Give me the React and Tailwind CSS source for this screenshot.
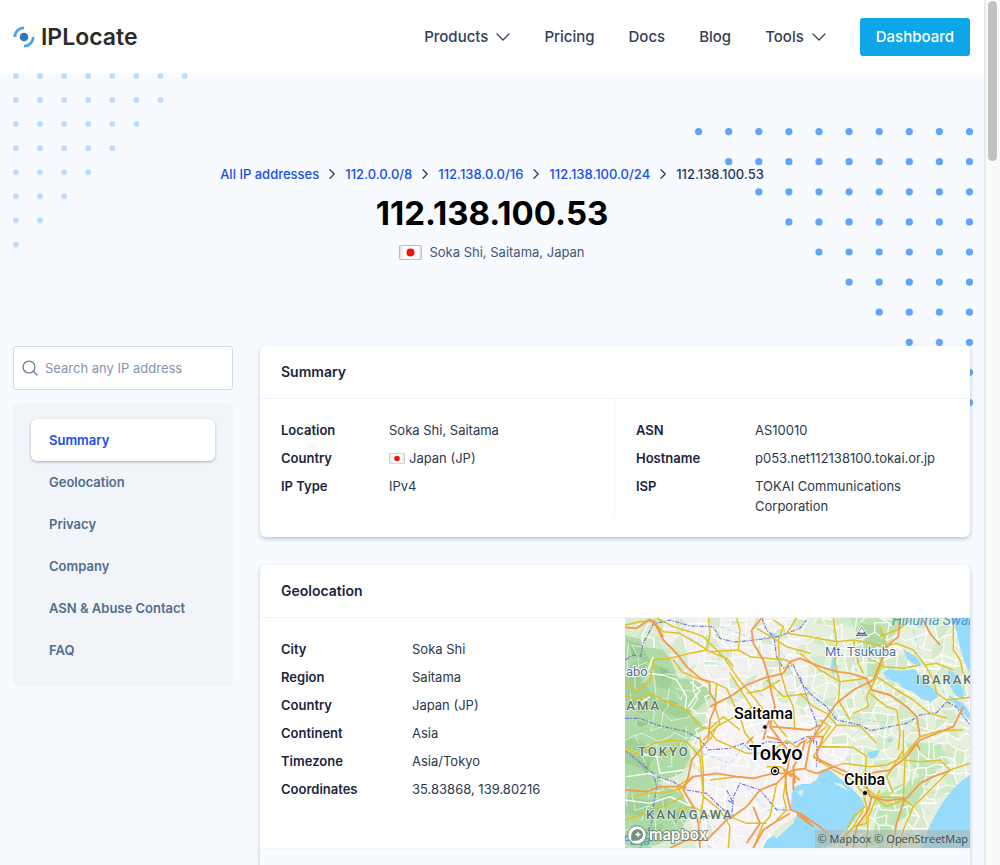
import React from "react";

const crumbs = ["All IP addresses", "112.0.0.0/8", "112.138.0.0/16", "112.138.100.0/24"];
const sections = ["Summary", "Geolocation", "Privacy", "Company", "ASN & Abuse Contact", "FAQ"];

function ChevronDown() {
  return (
    <svg width="14" height="8" viewBox="0 0 14 8" fill="none" stroke="#334155" strokeWidth="1.3" strokeLinecap="round" strokeLinejoin="round" aria-hidden="true">
      <path d="M1 1l6 6 6-6" />
    </svg>
  );
}

function ChevronRight() {
  return (
    <svg width="6" height="10" viewBox="0 0 6 10" fill="none" stroke="#334155" strokeWidth="1.3" strokeLinecap="round" strokeLinejoin="round" aria-hidden="true">
      <path d="M1 .8L5.2 5 1 9.200" />
    </svg>
  );
}

function Flag({ className }) {
  return (
    <svg className={className} viewBox="0 0 23 15" role="img" aria-label="Flag of Japan">
      <defs>
        <linearGradient id="flag-shade" x1="0" x2="1">
          <stop offset="0" stopColor="#dcdcdc" />
          <stop offset=".2" stopColor="#fff" />
          <stop offset=".8" stopColor="#fff" />
          <stop offset="1" stopColor="#dcdcdc" />
        </linearGradient>
      </defs>
      <rect x=".5" y=".5" width="22" height="14" rx="1" fill="url(#flag-shade)" stroke="#bdbdbd" />
      <circle cx="11.500" cy="7.500" r="4" fill="#f50f0f" />
    </svg>
  );
}

function Logo() {
  return (
    <a href="#home" className="flex items-center gap-[6px] text-[23px] leading-8 font-semibold text-[#2b2b2b]">
      <svg width="22" height="22" viewBox="0 0 22 22" fill="none" aria-hidden="true">
        <circle cx="11" cy="11" r="4.300" fill="#3178b9" />
        <path d="M1.800 11A9.200 9.200 0 0 1 11 1.800" stroke="#46a6ea" strokeWidth="2.800" />
        <path d="M20.200 11A9.200 9.200 0 0 1 11 20.200" stroke="#46a6ea" strokeWidth="2.800" />
      </svg>
      IPLocate
    </a>
  );
}

function DotTriangle({ className, count, pitch, radius, fromLeft }) {
  const size = (count - 1) * pitch + radius * 2;
  const dots = [];
  for (let row = 0; row < count; row += 1) {
    for (let col = 0; col < count - row; col += 1) {
      const offset = radius + col * pitch;
      dots.push(<circle key={`${row}-${col}`} cx={fromLeft ? offset : size - offset} cy={radius + row * pitch} r={radius} />);
    }
  }
  return (
    <svg className={className} width={size} height={size} viewBox={`0 0 ${size} ${size}`} fill="currentColor" aria-hidden="true">
      {dots}
    </svg>
  );
}

function Facts({ rows, labelClass }) {
  return (
    <dl className="flex flex-col gap-2 text-[13px] leading-5">
      {rows.map(([label, value]) => (
        <div key={label} className="flex">
          <dt className={`${labelClass} shrink-0 font-semibold text-[#1a2540]`}>{label}</dt>
          <dd className="min-w-0 text-[#2c384c]">{value}</dd>
        </div>
      ))}
    </dl>
  );
}

function Card({ title, children }) {
  return (
    <section className="overflow-hidden rounded-md bg-white shadow-[0_2px_4px_rgba(71,105,140,0.35)]">
      <h2 className="border-b border-[#f1f4f8] px-[21px] py-4 text-[14px] leading-5 font-semibold text-[#1a2540]">{title}</h2>
      {children}
    </section>
  );
}

/* Seeded generator, so that the minor street mesh is the same on every load. */
function streetMesh() {
  let seed = 17;
  const rand = () => {
    seed = (seed * 16807) % 2147483647;
    return seed / 2147483647;
  };
  const cols = 36;
  const rows = 24;
  const pts = [];
  for (let r = 0; r <= rows; r += 1) {
    pts.push([]);
    for (let c = 0; c <= cols; c += 1) {
      pts[r].push([15 + c * 30 + (rand() - 0.5) * 28, 20 + r * 30 + (rand() - 0.5) * 28]);
    }
  }
  const streets = [];
  const woods = [];
  const range = [];
  for (let r = 0; r < rows; r += 1) {
    for (let c = 0; c < cols; c += 1) {
      const [x, y] = pts[r][c];
      const right = pts[r][c + 1];
      const down = pts[r + 1][c];
      const diag = pts[r + 1][c + 1];
      const mountain = c < 7 && (r > 2 || c < 2);
      const list = mountain ? range : streets;
      const odds = mountain ? 0.35 : 0.66;
      if (rand() < odds) list.push(`M${x.toFixed(0)} ${y.toFixed(0)}L${right[0].toFixed(0)} ${right[1].toFixed(0)}`);
      if (rand() < odds) list.push(`M${x.toFixed(0)} ${y.toFixed(0)}L${down[0].toFixed(0)} ${down[1].toFixed(0)}`);
      if (rand() < 0.34) {
        woods.push(`M${x.toFixed(0)} ${y.toFixed(0)}L${right[0].toFixed(0)} ${right[1].toFixed(0)}L${diag[0].toFixed(0)} ${diag[1].toFixed(0)}L${down[0].toFixed(0)} ${down[1].toFixed(0)}Z`);
      }
    }
  }
  return { streets: streets.join(""), woods: woods.join(""), range: range.join("") };
}

const mesh = streetMesh();

function RegionMap() {
  return (
    <svg className="block h-full w-full" viewBox="0 0 345 230" preserveAspectRatio="xMidYMid slice" role="img" aria-label="Map of the Tokyo area">
      <g transform="translate(-5 -8) scale(0.33333)">
        <rect x="0" y="0" width="1080" height="740" fill="#e4efdc" />
        <path d="M15 24H300L290 90 250 130 300 210 290 300 260 420 200 560 240 714H15Z" fill="#dcebd4" />
        <path d="M120 24H520L570 120 560 250 610 330 720 470 700 560 520 714H230L190 540 230 400 270 280 200 190 120 100Z" fill="#f0f0ee" />
        <path d="M290 290L400 230 530 280 600 400 680 470 700 520 520 714H260L210 540 250 420Z" fill="#f6f2f5" />
        <path d="M560 330L620 280 680 380 700 500 600 500Z" fill="#f4f1f3" />
        <path d={mesh.woods} fill="#cbe6c0" opacity=".65" />
        <path d="M300 300L400 250 530 290 610 400 650 460 690 520 520 714H300L250 600 230 520 260 420Z" fill="#f6f2f5" opacity=".85" />
        {/* western ranges */}
        <path d="M15 75L60 88 70 110 125 118 150 145 175 205 225 210 262 235 272 262 230 300 190 290 262 355 225 372 200 400 212 440 185 490 110 520 175 545 220 600 195 640 160 680 90 714H15Z" fill="#aedba5" />
        <path d="M20 90L60 100 90 150 60 200 95 250 150 280 220 300 190 330 120 300 60 310 15 290V180L50 150ZM100 160L160 190 150 240 110 230ZM15 380L60 390 110 430 80 480 15 460ZM15 560L90 570 160 550 130 600 70 620 15 610ZM60 660L130 640 120 690 70 700Z" fill="#99cd92" opacity=".75" />
        <path d="M30 110L50 125 40 150ZM120 170L145 180 130 210ZM130 262L175 280 160 292ZM40 330L90 340 60 352ZM60 460L90 455 82 500ZM140 620L180 600 170 640ZM30 270L60 275 40 300Z" fill="#86bd82" opacity=".6" />
        {/* Mt. Tsukuba and Boso hills */}
        <path d="M690 24H860L820 80 800 150 770 210 740 200 745 140 700 120 710 70Z" fill="#bfe4b4" />
        <path d="M720 40L780 50 800 90 780 130 745 150 735 90Z" fill="#a5d49c" opacity=".7" />
        <path d="M760 560L850 520 950 480 900 560 870 610 830 640 800 714H750L770 620Z" fill="#bfe5b4" />
        <path d="M860 400L960 400 990 460 900 500 870 460ZM780 590L840 600 800 650Z" fill="#c3e7b8" />
        <path d={mesh.streets} fill="none" stroke="#fff" strokeWidth="3.800" strokeLinecap="round" opacity=".9" />
        <path d={mesh.range} fill="none" stroke="#eef8ea" strokeWidth="3" strokeLinecap="round" opacity=".75" />
        <path d="M100 140L80 190 130 195 170 210 200 260 195 300M90 260L30 300M210 215L240 240 205 290M15 420L110 440 120 490 190 480M15 570L90 580 150 560 215 590M20 500L90 490 150 520" fill="none" stroke="#fff" strokeWidth="4" strokeLinejoin="round" />
        {/* water */}
        <g fill="#97dcfc">
          <path d="M1000 24H1050V190Q1028 150 1018 105T1000 24Z" />
          <path d="M790 188L805 178 840 182 885 178 905 200 925 225 950 245 952 262 935 275 905 268 880 245 850 235 835 218 800 206Z" />
          <path d="M850 118L870 130 890 140 905 165 880 162 862 148ZM985 178L1005 190 1012 215 1030 235 1032 270 1005 255 990 225 982 205ZM985 255L1030 280 1050 310V330L1010 290Z" />
          <path d="M640 130L648 150 640 200 632 170ZM450 65L470 72 462 84 448 80ZM740 430L780 418 770 440 750 448ZM800 388L822 384 810 400Z" />
          <path d="M570 522L545 522 525 530 515 550 512 600 535 612 500 650 470 670 440 690 428 714H600L650 700 665 670 690 650 710 620 735 590 720 560 690 530 655 500 630 480 600 485 590 510Z" />
          <path d="M1050 494Q1000 525 960 590T905 714H1050Z" />
        </g>
        <path d="M530 545L550 540 545 560ZM455 670L530 612 520 640 470 685ZM690 545L660 520 640 520M710 618L685 640" fill="#e8edda" />
        <g fill="none" stroke="#97dcfc" strokeWidth="2.500" strokeDasharray="14 9" strokeLinejoin="round">
          <path d="M130 30L180 70 240 100 290 160 330 190M430 80L480 120 520 200M300 50L410 90M360 240L420 330M560 230L680 320 800 340M640 60L650 200M700 150L740 280M380 530L440 600 520 590M240 620L300 660M250 430L330 460 380 400" />
          <path d="M880 60L900 130M930 180L980 260M760 290L700 380M850 540L930 610" />
        </g>
        {/* prefecture borders */}
        <g fill="none" stroke="#7676d8" strokeWidth="3.500" strokeDasharray="13 4 4 4" strokeLinejoin="round">
          <path d="M15 150L40 135 62 140 70 100 100 42 150 30 210 48 280 50 300 85 340 96 390 92 440 85 480 78 540 55 560 30M425 24L440 60 462 82 470 140 490 175 520 165 545 220 580 260 620 290 650 330 720 345 752 362 800 352 860 340 900 315 950 308 980 275 1010 292 1050 345" />
          <path d="M15 325L60 325 110 345 200 365 240 388 265 420 330 415 370 400 390 420 440 395 520 400 560 380 590 395 590 470M540 200L570 290 590 340 580 400M15 420L50 450 100 490 110 530 100 590 95 640 60 714M110 500L160 515 200 540 260 550 300 590 335 620 340 560 360 520 420 540 470 600 510 600M320 540L340 580 320 570" />
        </g>
        {/* main roads */}
        <g fill="none" stroke="#e3c023" strokeWidth="4.500" strokeLinejoin="round">
          <path d="M15 45L60 35 95 32 130 65 180 70 230 100 270 125 320 145 340 170M110 24L160 50 210 65 250 80 280 110 310 140 350 200 400 260 430 300 455 350M265 24L270 70 260 120 210 130 150 145 100 150 90 215 50 245 15 218M160 148L185 185 230 205 275 215 320 235 340 280 360 320 375 370 400 400" />
          <path d="M350 24L360 60 355 120 390 140 440 145 500 150 520 165M355 120L270 125M410 55L460 85 500 110 570 130M460 30L490 50 475 90 480 180 500 250 520 290 525 360M15 260L60 265 90 250 130 270 200 300 240 350 270 356 310 320 360 360M290 220L285 290 300 340 250 390M330 190L400 300 450 320 500 380M440 210L490 260 570 250M380 250L430 240 480 210M530 24L500 70 570 80 650 95 700 90 745 98 790 110 830 100 880 120 915 165 950 160 1000 180" />
          <path d="M640 24L650 100 645 160 660 220 655 270 690 330M540 130L600 180 660 215 740 205M780 80L840 55 870 30M780 50L800 110 770 200 740 260 745 290 700 310M700 90L715 160 730 190M1000 24L1000 120 1020 150 1035 210M770 200L830 240 880 270 930 310 980 325M915 165L940 210 950 250 980 270 1050 262M760 150L790 170 850 175 900 165M750 250L800 290 830 300 840 370 835 420M540 250L580 290 620 310 650 345 720 348 770 400M650 345L600 410 660 410" />
          <path d="M15 420L60 430 100 400 150 390 200 395 240 440 250 560 300 600 330 650 325 714M15 630L80 610 150 580 190 560 170 530 220 500M265 360L290 390 380 430 450 430 500 390 540 420M240 380L250 480 250 560 240 640M270 510L350 500 400 505M330 620L380 640 440 640M470 520L450 620 430 640 400 714M500 490L490 560 500 600 470 630M530 500L480 470 440 470M600 410L580 440 640 480 690 505 730 550 740 590 740 640 700 650 660 700" />
          <path d="M590 410L700 412 740 440 735 490 740 520M600 485L670 460 750 470 800 465 850 440 850 360M740 545L800 590 850 570 855 450 900 455 960 450 990 480 1050 460M855 570L880 590 940 530 990 480M850 440L900 380 960 362 1030 360M720 520L770 560 860 565M780 540L745 620 740 714M880 590L850 660 840 714M680 660L700 620 735 590" />
          <path d="M270 390L290 350 400 290M120 440L180 400M160 600L220 590 270 620M40 560L80 550 130 550 200 530M660 690L700 650 730 600M560 400L620 350M600 330L630 350 610 380M850 420L800 500 820 550" />
        </g>
        <g fill="none" stroke="#f39a4e" strokeWidth="5.500" strokeLinejoin="round">
          <path d="M15 52L50 55 90 28 110 50 130 90 170 130 200 170 240 205 268 218 270 250 290 280 270 330 265 390 240 420 215 450 205 500 190 540 220 590 235 640 240 714M100 30L130 80M425 24L395 60 400 100 430 150 445 200 455 250 465 290 450 350 480 390M270 290L330 260 380 225 430 205 490 190 510 155 540 145 600 170 650 185 690 190 740 205 755 240 810 255 860 290 890 320 900 380" />
          <path d="M840 24L835 80 800 110 780 160 760 210 700 240 650 280 600 350 570 400 555 480M910 30L930 70 960 105M465 290L440 350 430 390M1030 290L1000 350 900 390 860 440 810 480 760 488 730 490M15 540L80 545 120 530 190 530 220 500 290 490 350 500 400 505 460 490 500 490 520 480 560 475" />
          <path d="M500 490L510 430 480 390 440 380M495 490L500 550 512 600 540 610 600 650 650 700M510 440L540 400 560 390M330 625L380 590 420 540 470 520 500 490M150 714L200 690 260 690 330 620M510 610L460 640 430 660 400 714M400 590L420 640 380 700M530 612L580 650M380 400L400 380M560 480L590 490 620 480 640 470 690 490 740 530 750 560 800 572 860 565 900 520 940 500 990 482M540 612L570 640" />
          <path d="M560 380L610 380 590 430 600 460M555 390L545 430 520 470 525 520M580 440L640 470M755 560L745 600 710 650 700 714M855 565L830 640 815 714M860 440L890 400 900 420M520 470L520 540M490 480L515 500M510 490L540 510M455 350L570 360 600 345" />
        </g>
        <path d="M725 48L746 80H704Z" fill="#5f6b95" stroke="#fff" strokeWidth="3" />
        <path d="M718 65L725 55 732 65 728 69 725 65 722 69Z M712 74H738" fill="#fff" stroke="#fff" strokeWidth="1.500" />
      </g>
      <g fontFamily="Roboto, 'Noto Sans', sans-serif" paintOrder="stroke" strokeLinejoin="round">
        <g fill="#58756a" stroke="#e9f3e4" strokeWidth="1.500" fontSize="13" fontWeight="500" letterSpacing="2">
          <text x="-8" y="92">TAMA</text>
          <text x="13" y="138">TOKYO</text>
          <text x="21" y="201">KANAGAWA</text>
          <text x="291" y="66">IBARAKI</text>
        </g>
        <g fill="#52709a" stroke="#fff" strokeWidth="2">
          <text x="1" y="58" fontSize="13">abo</text>
          <text x="200" y="38" fontSize="13">Mt. Tsukuba</text>
        </g>
        <g fill="#4a9bd0" fontStyle="italic">
          <text x="267" y="7" fontSize="14">Hinuma Swamp</text>
          <text x="-2" y="227" fontSize="13">Fuka</text>
        </g>
        <g fill="#000" stroke="#fff" strokeWidth="2.500" fontWeight="500">
          <text x="109" y="101" fontSize="16">Saitama</text>
          <text x="124" y="142" fontSize="20">Tokyo</text>
          <text x="219" y="167" fontSize="16">Chiba</text>
        </g>
      </g>
      <circle cx="140" cy="109" r="2.300" stroke="#fff" strokeWidth=".7" />
      <circle cx="240" cy="175" r="2.500" stroke="#fff" strokeWidth=".7" />
      <circle cx="150" cy="153" r="3.600" fill="#fff" stroke="#000" strokeWidth="1.200" />
      <circle cx="150" cy="153" r="1.700" />
      <g stroke="#566a5c" strokeWidth=".8">
        <circle cx="12" cy="217" r="9.300" fill="#fff" />
        <path d="M6.500 222.500C5.500 217 6.500 211.500 12.500 211.300C16 211.300 18 213.700 18 216.500C18 221.500 12 223.800 6.500 222.500Z" fill="#77907a" stroke="none" />
        <path d="M13 213.200l1 2.300 2.300 1-2.300 1-1 2.300-1-2.300-2.300-1 2.300-1Z" fill="#fff" stroke="none" />
      </g>
      <text x="24" y="222" fontFamily="Inter, sans-serif" fontSize="15" fontWeight="600" fill="#fff" stroke="#63756a" strokeWidth="1.600" paintOrder="stroke">mapbox</text>
    </svg>
  );
}

const summaryLeft = [
  ["Location", "Soka Shi, Saitama"],
  [
    "Country",
    <span className="flex items-center gap-1">
      <Flag className="h-[11px] w-4" />
      Japan (JP)
    </span>,
  ],
  ["IP Type", "IPv4"],
];
const summaryRight = [
  ["ASN", "AS10010"],
  ["Hostname", "p053.net112138100.tokai.or.jp"],
  ["ISP", "TOKAI Communications Corporation"],
];
const geo = [
  ["City", "Soka Shi"],
  ["Region", "Saitama"],
  ["Country", "Japan (JP)"],
  ["Continent", "Asia"],
  ["Timezone", "Asia/Tokyo"],
  ["Coordinates", "35.83868, 139.80216"],
];

export default function App() {
  return (
    <div className="flex h-screen overflow-hidden bg-[#f7fafe] font-['Inter',sans-serif]">
      <div className="relative h-full min-w-0 flex-1 overflow-hidden">
        <DotTriangle className="absolute top-[73px] left-[13px] text-[#bfdbfe]" count={8} pitch={24.1} radius={2.9} fromLeft />
        <div className="absolute top-[128px] right-[11px] text-[#60a5fa]">
          <DotTriangle count={10} pitch={30.1} radius={3.6} />
        </div>

        <header className="relative flex h-[73px] items-center justify-between bg-white pr-[14px] pl-[13px]">
          <Logo />
          <nav className="flex items-center gap-[34px] text-[15px] leading-5 font-medium text-[#334155]">
            <button type="button" className="flex items-center gap-2">
              Products
              <ChevronDown />
            </button>
            <a href="#pricing">Pricing</a>
            <a href="#docs">Docs</a>
            <a href="#blog">Blog</a>
            <button type="button" className="flex items-center gap-2">
              Tools
              <ChevronDown />
            </button>
            <a href="#dashboard" className="rounded-[3px] bg-[#0ea5e9] px-4 py-[9px] text-white">
              Dashboard
            </a>
          </nav>
        </header>

        <div className="relative flex flex-col items-center pt-[91px]">
          <nav aria-label="Breadcrumb" className="flex items-center gap-[10px] text-[13px] leading-5 font-medium text-[#1550e8]">
            {crumbs.map((crumb) => (
              <React.Fragment key={crumb}>
                <a href="#range">{crumb}</a>
                <ChevronRight />
              </React.Fragment>
            ))}
            <span className="text-[#1e3a5f]">112.138.100.53</span>
          </nav>
          <h1 className="mt-2 text-[33px] leading-[42px] font-bold text-black">112.138.100.53</h1>
          <p className="mt-2 flex items-center gap-[7px] text-[13px] leading-5 text-[#3f5878]">
            <Flag className="h-[15px] w-[23px]" />
            Soka Shi, Saitama, Japan
          </p>
        </div>

        <main className="relative mt-21 flex items-start gap-[27px] pr-[14px] pl-[13px]">
          <aside className="flex w-[220px] shrink-0 flex-col gap-[13px]">
            <label className="flex h-11 items-center gap-[7px] rounded-[3px] border border-[#d3dae3] bg-white px-2">
              <svg width="16" height="16" viewBox="0 0 16 16" fill="none" stroke="#64809f" strokeWidth="1.300" strokeLinecap="round" aria-hidden="true">
                <circle cx="7" cy="7" r="5.900" />
                <path d="M11.300 11.300L15 15" />
              </svg>
              <input type="text" aria-label="Search any IP address" placeholder="Search any IP address" className="min-w-0 flex-1 bg-transparent text-[13px] leading-5 outline-none placeholder:text-[#7f96b2]" />
            </label>
            <nav aria-label="Sections" className="flex flex-col rounded-md bg-[#f1f4f8] px-[18px] py-4 text-[13px] leading-5 font-semibold">
              {sections.map((name, index) => (
                <a
                  key={name}
                  href={`#section-${index}`}
                  className={
                    index === 0
                      ? "rounded-md bg-white px-[18px] py-[11px] text-[#1550e8] shadow-[0_1px_3px_rgba(71,105,140,0.45)]"
                      : "px-[18px] py-[11px] text-[#526e8f]"
                  }
                >
                  {name}
                </a>
              ))}
            </nav>
          </aside>

          <div className="flex min-w-0 flex-1 flex-col gap-7">
            <Card title="Summary">
              <div className="grid grid-cols-2 pb-[21px]">
                <div className="border-r border-[#f1f4f8] px-[21px] pt-[21px]">
                  <Facts rows={summaryLeft} labelClass="w-[108px]" />
                </div>
                <div className="px-[21px] pt-[21px]">
                  <Facts rows={summaryRight} labelClass="w-[119px]" />
                </div>
              </div>
            </Card>

            <Card title="Geolocation">
              <div className="flex">
                <div className="flex-1 px-[21px] pt-[21px] pb-10">
                  <Facts rows={geo} labelClass="w-[131px]" />
                </div>
                <div className="relative h-[230px] w-[345px] shrink-0 overflow-hidden">
                  <RegionMap />
                  <p className="absolute right-0 bottom-0 flex gap-[3px] bg-[#a9b8b0]/60 px-[2px] font-['Open_Sans',sans-serif] text-[11px] leading-[18px] text-[#404a50]">
                    <a href="#mapbox">© Mapbox</a>
                    <a href="#osm">© OpenStreetMap</a>
                  </p>
                </div>
              </div>
              <div className="h-16 border-t border-[#f1f4f8] bg-[#f7fafe]" />
            </Card>
          </div>
        </main>
      </div>

      <div className="w-4 shrink-0 border-l-2 border-[#e9eaec] bg-[#fafafa] px-[2px] py-px" aria-hidden="true">
        <div className="h-40 w-[9px] rounded-full bg-[#c1c1c1]" />
      </div>
    </div>
  );
}
